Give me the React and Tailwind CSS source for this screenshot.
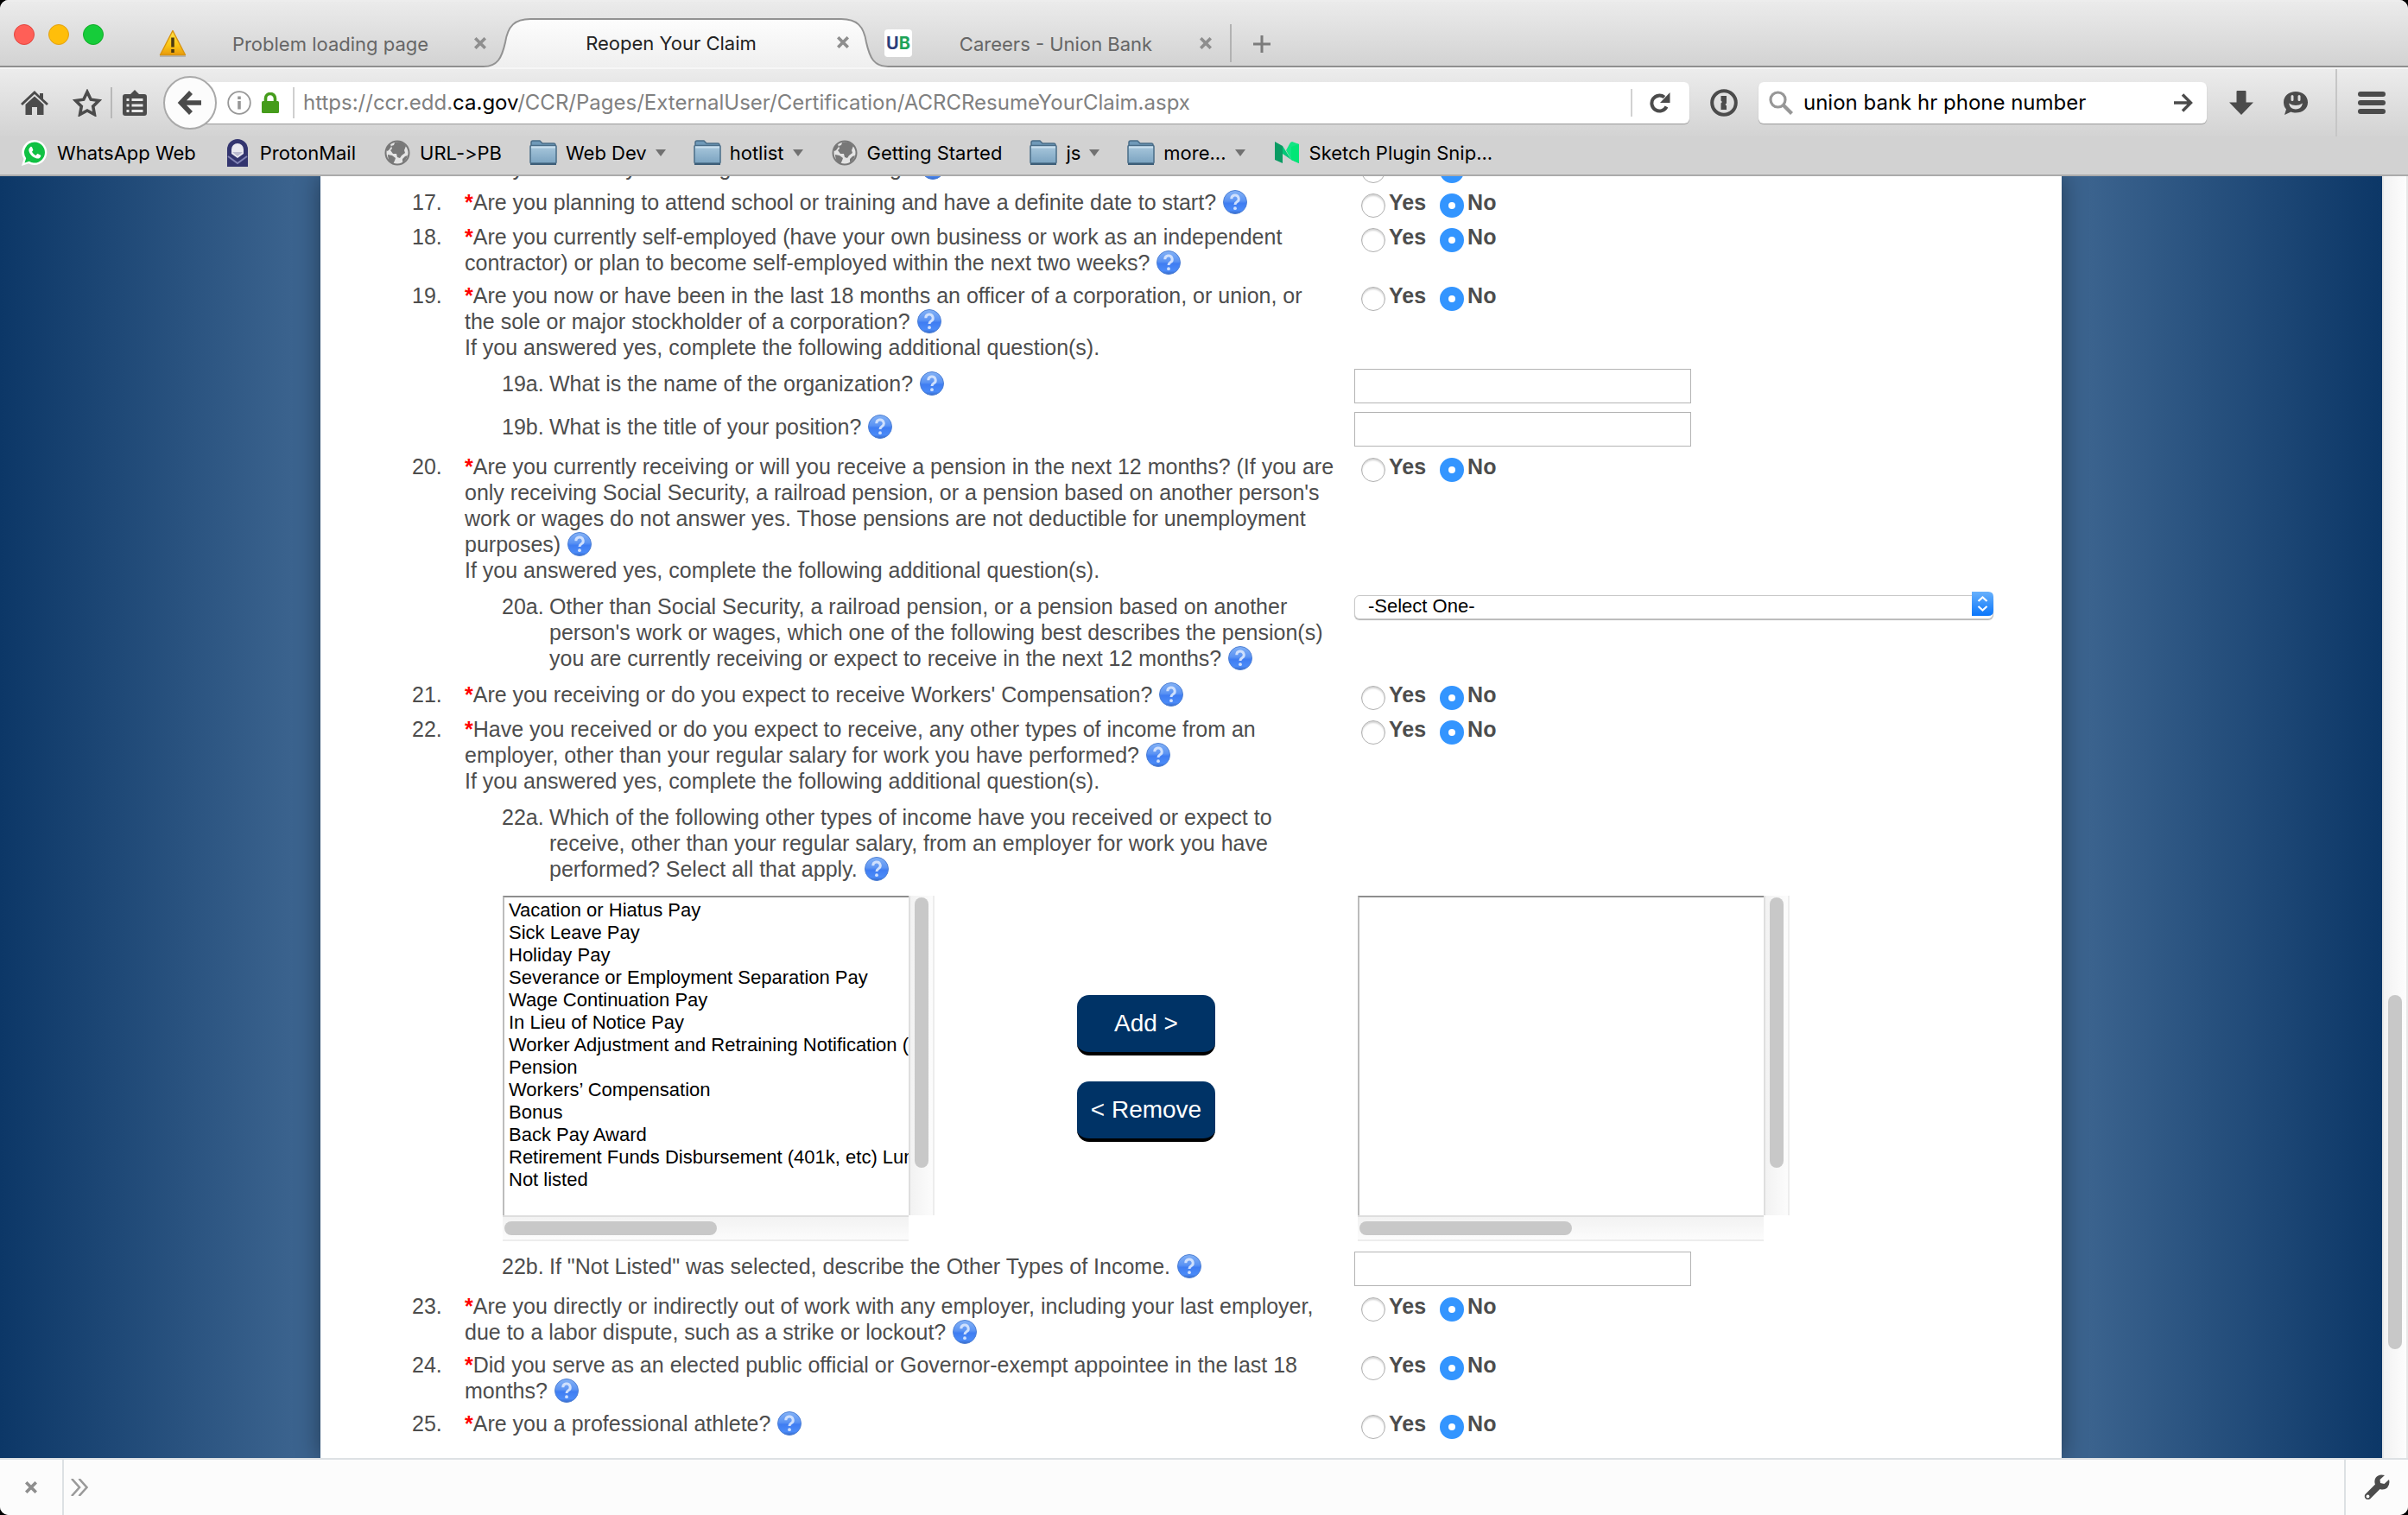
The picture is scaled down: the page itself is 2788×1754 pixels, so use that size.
import { useId } from "react";

const CLOSE = (
  <svg viewBox="0 0 14 14" className="size-3.5" aria-hidden="true">
    <path d="M2.5 2.5l9 9M11.5 2.5l-9 9" stroke="#8e8e8e" strokeWidth="3.6" strokeLinecap="square" />
  </svg>
);

function WarningIcon() {
  return (
    <svg viewBox="0 0 32 32" className="size-8 shrink-0" aria-hidden="true">
      <defs>
        <linearGradient id="warn" x1="0" y1="0" x2="0" y2="1">
          <stop offset="0" stopColor="#ffe14a" />
          <stop offset="0.6" stopColor="#fbc614" />
          <stop offset="1" stopColor="#e89a0c" />
        </linearGradient>
      </defs>
      <path d="M1 31h30" stroke="#b5b5b5" strokeWidth="2" />
      <path d="M16 1.5L30.5 29.5H1.5z" fill="url(#warn)" stroke="#d9940f" strokeWidth="1.4" strokeLinejoin="round" />
      <path d="M16 9.500v11" stroke="#4b3a12" strokeWidth="3.600" />
      <path d="M16 23v4" stroke="#4b3a12" strokeWidth="3.600" />
    </svg>
  );
}

function Globe() {
  return (
    <svg viewBox="0 0 30 30" className="size-[30px] shrink-0" aria-hidden="true">
      <circle cx="15" cy="15" r="13.500" fill="#e4e4e4" stroke="#787878" strokeWidth="2" />
      <path
        d="M12 3c5-2 10 0 13 4l-2 5 1 3-4 3-2 3-3-1-1-4-4 0-3-4 2-2-1-3 3-1zM3 8l4-3 1 3-3 4-2 1zM4 17l5 1 4 3-1 3-2 4c-4-2-6-6-6-11zM24 19l3-1c-1 4-3 6-6 8l0-4z"
        fill="#787878"
      />
    </svg>
  );
}

function Folder() {
  return (
    <svg viewBox="0 0 32 30" className="h-[30px] w-8 shrink-0" aria-hidden="true">
      <defs>
        <linearGradient id="folder" x1="0" y1="0" x2="0" y2="1">
          <stop offset="0" stopColor="#a9c8dd" />
          <stop offset="1" stopColor="#7ba3c0" />
        </linearGradient>
      </defs>
      <path d="M2 8V3q0-2 2-2h8l3 3h13q2 0 2 2v3z" fill="#6f99b8" stroke="#4a6d88" strokeWidth="1.500" />
      <rect x="1" y="6.500" width="30" height="20.500" rx="1" fill="url(#folder)" stroke="#4a6d88" strokeWidth="1.500" />
      <path d="M2 8.500h28" stroke="#c9dfee" strokeWidth="2" />
      <path d="M1 28h30" stroke="#3d5e78" strokeWidth="2" />
    </svg>
  );
}

function WhatsApp() {
  return (
    <svg viewBox="0 0 32 32" className="size-8 shrink-0" aria-hidden="true">
      <path d="M16 1a14.500 14.500 0 1 1-7 27.300L1 31l2.500-8A14.500 14.500 0 0 1 16 1z" fill="#fff" />
      <path d="M16 3.500a12 12 0 1 1-6.200 22.300L4.500 27.500l1.700-5.200A12 12 0 0 1 16 3.500z" fill="#10c143" />
      <path
        d="M11.200 9.200c.6-.5 1.500-.5 1.900.3l1.200 2.700c.2.500 0 1-.3 1.300l-1 1.200c1.100 2 2.500 3.300 4.600 4.200l1.200-1.400c.4-.5.9-.5 1.400-.3l2.500 1.300c.6.300.7.800.5 1.400-.6 1.900-2.500 2.900-4.400 2.500-4.600-1-8-4-9.300-8.400-.5-1.900.2-3.800 1.700-4.800z"
        fill="#fff"
      />
    </svg>
  );
}

function Proton() {
  return (
    <svg viewBox="0 0 24 32" className="h-8 w-6 shrink-0" aria-hidden="true">
      <path d="M0 32V12a12 12 0 0 1 24 0v20z" fill="#33356f" />
      <path d="M5 17v-5a7 7 0 0 1 14 0v5l-7 5z" fill="#e9e9f0" />
      <path d="M6 15h12l-6 5z" fill="#33356f" opacity="0.25" />
      <path d="M1 20l11 8 11-8" stroke="#8082b4" strokeWidth="2" fill="none" />
    </svg>
  );
}

function MediumLogo() {
  return (
    <svg viewBox="0 0 28 26" className="h-[26px] w-7 shrink-0" aria-hidden="true">
      <path d="M0 0l9 5v20L0 21z" fill="#0a9b63" />
      <path d="M9 5l10 16V1L28 3v22l-9-4L9 14z" fill="#00c878" />
      <path d="M18 1l-5 9 6 11 9-18-8-3z" fill="#11e583" />
      <path d="M19 6l9-3v22l-9-4z" fill="#00e676" />
    </svg>
  );
}

const BOOKMARKS = [
  { icon: <WhatsApp />, label: "WhatsApp Web" },
  { icon: <Proton />, label: "ProtonMail" },
  { icon: <Globe />, label: "URL->PB" },
  { icon: <Folder />, label: "Web Dev", menu: true },
  { icon: <Folder />, label: "hotlist", menu: true },
  { icon: <Globe />, label: "Getting Started" },
  { icon: <Folder />, label: "js", menu: true },
  { icon: <Folder />, label: "more...", menu: true },
  { icon: <MediumLogo />, label: "Sketch Plugin Snip..." },
];

function Tab({ icon, title }) {
  return (
    <div className="flex h-14 w-[379px] items-center">
      {icon}
      <span className="flex-1 pt-0.5 text-center text-[#666]">{title}</span>
      <button type="button" aria-label={"Close " + title}>{CLOSE}</button>
    </div>
  );
}

function TabStrip() {
  return (
    <div className="flex h-[78px] items-end border-t-2 border-white/60 bg-[linear-gradient(#ebebeb,#d2d2d2)] text-[22px] shadow-[inset_0_-2px_0_#8f8f8f]">
      <div className="flex h-[76px] w-[184px] shrink-0 items-center gap-4 pl-4">
        <button type="button" aria-label="Close window" className="size-6 rounded-full border border-[#e2463f] bg-[#ff5f57]" />
        <button type="button" aria-label="Minimize window" className="size-6 rounded-full border border-[#e1a116] bg-[#ffbe0a]" />
        <button type="button" aria-label="Zoom window" className="size-6 rounded-full border border-[#12ac28] bg-[#16cc3a]" />
      </div>
      <Tab icon={<WarningIcon />} title="Problem loading page" />
      <div className="relative -ml-[3px] flex h-[58px] w-[468px] items-center pr-[45px] pl-[25px]">
        <svg viewBox="0 0 468 58" preserveAspectRatio="none" className="absolute inset-0 size-full" aria-hidden="true">
          <defs>
            <linearGradient id="tab" x1="0" y1="0" x2="0" y2="1">
              <stop offset="0" stopColor="#fdfdfd" />
              <stop offset="1" stopColor="#efefef" />
            </linearGradient>
          </defs>
          <path d="M0 57C16 57 21 47 25 29C28 10 36 2 54 2H414C432 2 440 10 443 29C447 47 452 57 468 57V58H0z" fill="url(#tab)" />
          <path d="M0 57C16 57 21 47 25 29C28 10 36 2 54 2H414C432 2 440 10 443 29C447 47 452 57 468 57" fill="none" stroke="#929292" strokeWidth="2" />
        </svg>
        <span className="relative flex-1 pt-0.5 text-center text-[#222]">Reopen Your Claim</span>
        <button type="button" aria-label="Close Reopen Your Claim" className="relative">{CLOSE}</button>
      </div>
      <div className="-ml-1 flex">
        <Tab
          icon={
            <span className="flex size-8 items-center justify-center rounded-sm bg-white text-[20px] font-bold text-[#2d3f7c]">
              U<span className="text-[#1ea358]">B</span>
            </span>
          }
          title="Careers - Union Bank"
        />
      </div>
      <div className="mb-1.5 ml-[21px] h-11 w-0.5 bg-[#b2b2b2]" />
      <button type="button" aria-label="New tab" className="mb-[17px] ml-[25px]">
        <svg viewBox="0 0 20 20" className="size-5" aria-hidden="true">
          <path d="M10 0v20M0 10h20" stroke="#7b7b7b" strokeWidth="3" />
        </svg>
      </button>
    </div>
  );
}

function NavBar() {
  return (
    <div className="flex h-20 items-center border-t-2 border-[#f6f6f6] bg-[linear-gradient(#ececec,#d3d3d3)] text-[#4b4b4b]">
      <button type="button" aria-label="Home" className="ml-6">
        <svg viewBox="0 0 32 28" className="h-7 w-8" fill="currentColor" aria-hidden="true">
          <path d="M16 0L0 15l2 2L16 4l14 13 2-2-6-5.500V3h-4v3z" />
          <path d="M16 6.500L5.500 16v12H13v-9h6v9h7.500V16z" />
        </svg>
      </button>
      <button type="button" aria-label="Bookmark this page" className="ml-7">
        <svg viewBox="0 0 34 32" className="h-8 w-[34px]" aria-hidden="true">
          <path d="M17 3.500l4.200 8.700 9.300 1.300-6.800 6.600 1.700 9.400L17 25l-8.400 4.500 1.700-9.400-6.800-6.600 9.300-1.300z" fill="none" stroke="currentColor" strokeWidth="3.600" />
        </svg>
      </button>
      <div className="ml-2.5 h-9 w-0.5 bg-[#b8b8b8]" />
      <button type="button" aria-label="Show bookmarks" className="ml-[11px]">
        <svg viewBox="0 0 30 30" className="size-[30px]" aria-hidden="true">
          <path d="M4 5h6l5-5 5 5h6q3 0 3 3v19q0 3-3 3H4q-3 0-3-3V8q0-3 3-3z" fill="currentColor" />
          <path d="M5.500 11.500h3M11.500 11.500h13M5.500 18h3M11.500 18h13M5.500 24.500h3M11.500 24.500h13" stroke="#e8e8e8" strokeWidth="3" />
        </svg>
      </button>
      <div className="ml-[18px] flex flex-1 items-center">
        <button type="button" aria-label="Back" className="relative flex size-[62px] shrink-0 items-center justify-center rounded-full border-2 border-[#a9a9a9] bg-[#fcfcfc]">
          <svg viewBox="0 0 30 30" className="size-[30px]" aria-hidden="true">
            <path d="M16 3L4.500 15 16 27M5 15h23" fill="none" stroke="currentColor" strokeWidth="5.500" />
          </svg>
        </button>
        <div className="-ml-5 flex h-12 flex-1 items-center rounded-r-md bg-white pl-8 shadow-[0_1px_1px_#9a9a9a]">
          <svg viewBox="0 0 28 28" className="size-7 shrink-0" aria-hidden="true">
            <circle cx="14" cy="14" r="12.800" fill="none" stroke="#979797" strokeWidth="1.800" />
            <path d="M14 6.500v3.500M14 12v9.500" stroke="#979797" strokeWidth="3.600" />
          </svg>
          <svg viewBox="0 0 20 24" className="ml-3 h-6 w-5 shrink-0" aria-hidden="true">
            <rect x="0" y="10" width="20" height="14" rx="1.500" fill="#459c1b" />
            <path d="M4.500 11V7a5.500 5.500 0 0 1 11 0v4" fill="none" stroke="#459c1b" strokeWidth="3.600" />
          </svg>
          <div className="ml-4 h-9 w-0.5 shrink-0 bg-[#cfcfcf]" />
          <div className="ml-2.5 flex-1 text-[24px] text-[#808080]">
            https://ccr.edd.<span className="text-black">ca.gov</span>/CCR/Pages/ExternalUser/Certification/ACRCResumeYourClaim.aspx
          </div>
          <div className="h-8 w-0.5 bg-[#d2d2d2]" />
          <button type="button" aria-label="Reload" className="mr-[22px] ml-5">
            <svg viewBox="0 0 24 24" className="size-6" aria-hidden="true">
              <path d="M19.500 16.500A9 9 0 1 1 17 5.500" fill="none" stroke="currentColor" strokeWidth="4" />
              <path d="M23.500 0v12H12z" fill="currentColor" />
            </svg>
          </button>
        </div>
      </div>
      <button type="button" aria-label="1Password" className="ml-6">
        <svg viewBox="0 0 32 32" className="size-8" aria-hidden="true">
          <circle cx="16" cy="16" r="13.800" fill="none" stroke="currentColor" strokeWidth="4" />
          <path d="M12.500 8h6.500v8.500l-1.500 1.500 1.500 1.500V24h-6.500v-7.500l1.500-1.500-1.500-1.500z" fill="currentColor" />
        </svg>
      </button>
      <div className="ml-6 flex h-12 w-[519px] items-center rounded-md bg-white pr-4 pl-3 shadow-[0_1px_1px_#9a9a9a]">
        <svg viewBox="0 0 28 28" className="size-7 shrink-0" aria-hidden="true">
          <circle cx="10.500" cy="10.500" r="8.500" fill="none" stroke="#979797" strokeWidth="3.200" />
          <path d="M17 17l9.500 9.500" stroke="#979797" strokeWidth="4.200" />
        </svg>
        <input aria-label="Search" defaultValue="union bank hr phone number" className="ml-3 min-w-0 flex-1 bg-transparent text-[24px] text-black outline-none" />
        <button type="button" aria-label="Submit search">
          <svg viewBox="0 0 22 22" className="size-[22px]" aria-hidden="true">
            <path d="M10 1.500l9.500 9.500-9.500 9.500M0 11h18" fill="none" stroke="currentColor" strokeWidth="3.400" />
          </svg>
        </button>
      </div>
      <button type="button" aria-label="Downloads" className="ml-[26px]">
        <svg viewBox="0 0 28 28" className="size-7" fill="currentColor" aria-hidden="true">
          <path d="M8.500 1q0-1 1-1h9q1 0 1 1v12.500H28L14 28 0 13.500h8.500z" />
        </svg>
      </button>
      <button type="button" aria-label="Chat" className="ml-[34px]">
        <svg viewBox="0 0 30 28" className="h-7 w-[30px]" aria-hidden="true">
          <path d="M15 1c8 0 14 5 14 12.500S23 25.500 15 25.500c-2 0-4-.3-5.500-1L2 28l2-6.500C2 19.500 1 16.500 1 13.500 1 6 7 1 15 1z" fill="currentColor" />
          <path d="M11 6.500v4M19 6.500v4" stroke="#e0e0e0" strokeWidth="3" strokeLinecap="round" />
          <path d="M7 14.500q8 5 16 0-1.500 7-8 7t-8-7z" fill="#e0e0e0" />
        </svg>
      </button>
      <div className="ml-[31px] h-full w-0.5 bg-[#c6c6c6]" />
      <button type="button" aria-label="Open menu" className="mr-[26px] ml-6 flex flex-col gap-1">
        <span className="h-1.5 w-8 rounded-[3px] bg-[#4b4b4b]" />
        <span className="h-1.5 w-8 rounded-[3px] bg-[#4b4b4b]" />
        <span className="h-1.5 w-8 rounded-[3px] bg-[#4b4b4b]" />
      </button>
    </div>
  );
}

function BookmarksBar() {
  return (
    <nav className="flex h-[46px] items-center gap-8 border-b-2 border-[#ababab] bg-[#d2d2d2] pb-1.5 pl-6 text-[22px] text-black [font-variant-ligatures:none]">
      {BOOKMARKS.map((b) => (
        <a key={b.label} href="#" className="flex items-center gap-2.5 whitespace-nowrap">
          <span className="flex w-8 justify-center">{b.icon}</span>
          {b.label}
          {b.menu && (
            <svg viewBox="0 0 12 8" className="h-2 w-3" aria-hidden="true">
              <path d="M0 0h12L6 8z" fill="#717171" />
            </svg>
          )}
        </a>
      ))}
    </nav>
  );
}

function Help() {
  return (
    <button type="button" aria-label="Help" className="-mt-1 ml-2 inline-block size-7 align-middle">
      <svg viewBox="0 0 28 28" className="size-7" aria-hidden="true">
        <defs>
          <linearGradient id="help" x1="0" y1="0" x2="0" y2="1">
            <stop offset="0" stopColor="#83b2f6" />
            <stop offset="0.450" stopColor="#5b93f3" />
            <stop offset="0.550" stopColor="#3f7df2" />
            <stop offset="0.850" stopColor="#4a8af8" />
            <stop offset="1" stopColor="#3468c8" />
          </linearGradient>
        </defs>
        <circle cx="14" cy="14" r="13.500" fill="url(#help)" stroke="#4f80d4" strokeWidth="1" />
        <path d="M9.800 10.300a4.200 4.200 0 1 1 6.300 3.500c-1.500.9-2.100 1.500-2.100 3.200" fill="none" stroke="#cfe0fd" strokeWidth="3" />
        <circle cx="14" cy="21.200" r="1.900" fill="#cfe0fd" />
      </svg>
    </button>
  );
}

const RADIO =
  "mt-2 size-7 shrink-0 appearance-none rounded-full border border-[#b0b0b0] bg-white shadow-[inset_0_2px_2px_#d4d4d4] checked:border-[10px] checked:border-[#3395ff] checked:shadow-none";

function YesNo({ n }) {
  return (
    <div role="radiogroup" aria-label={"Question " + n} className="flex h-[30px] items-center gap-4 pl-2 font-bold">
      <label className="flex items-center gap-1">
        <input type="radio" name={"q" + n} value="yes" className={RADIO} />
        Yes
      </label>
      <label className="flex items-center gap-1">
        <input type="radio" name={"q" + n} value="no" defaultChecked className={RADIO} />
        No
      </label>
    </div>
  );
}

function Question({ n, children, followUp, className }) {
  return (
    <div className={"grid grid-cols-[61px_1030px_1fr] pl-[106px] " + className}>
      <div>{n}.</div>
      <div className="pr-[22px]">
        <span className="font-bold text-[#f00]">*</span>
        {children}
        <Help />
        {followUp && <div>If you answered yes, complete the following additional question(s).</div>}
      </div>
      <YesNo n={n} />
    </div>
  );
}

function SubQuestion({ n, text, className, children }) {
  const id = useId();
  return (
    <div className={"grid grid-cols-[55px_932px_1fr] pl-[210px] " + className}>
      <div className="pt-0.5">{n}.</div>
      <div className="pt-0.5 pr-2">
        <label htmlFor={id}>{text}</label>
        <Help />
      </div>
      {children && children(id)}
    </div>
  );
}

const textBox = (id) => <input id={id} type="text" className="h-10 w-[390px] border border-[#b4b4b4] bg-white px-2 outline-none" />;

const pensionSelect = (id) => (
  <div className="relative h-7 w-[740px]">
    <select id={id} className="h-7 w-full appearance-none rounded-md border border-[#c9c9c9] bg-white pb-0.5 pl-[15px] text-[22px] leading-[24px] text-black shadow-[0_1px_1px_#b0b0b0]">
      <option>-Select One-</option>
    </select>
    <svg viewBox="0 0 25 28" className="pointer-events-none absolute top-0 right-0 h-7 w-[25px]" aria-hidden="true">
      <defs>
        <linearGradient id="sel" x1="0" y1="0" x2="0" y2="1">
          <stop offset="0" stopColor="#68b1fc" />
          <stop offset="1" stopColor="#0a76fb" />
        </linearGradient>
      </defs>
      <path d="M0 0H19q6 0 6 6V22q0 6-6 6H0z" fill="url(#sel)" />
      <path d="M7.500 11L12.500 6.500 17.500 11M7.500 17l5 4.500 5-4.500" fill="none" stroke="#fff" strokeWidth="2.200" />
    </svg>
  </div>
);

const INCOME = [
  "Vacation or Hiatus Pay",
  "Sick Leave Pay",
  "Holiday Pay",
  "Severance or Employment Separation Pay",
  "Wage Continuation Pay",
  "In Lieu of Notice Pay",
  "Worker Adjustment and Retraining Notification (WARN)",
  "Pension",
  "Workers’ Compensation",
  "Bonus",
  "Back Pay Award",
  "Retirement Funds Disbursement (401k, etc) Lump Sum",
  "Not listed",
];

function ListBox({ label, items }) {
  return (
    <div className="grid h-[400px] w-[500px] grid-cols-[1fr_30px] grid-rows-[1fr_30px]">
      <select
        multiple
        aria-label={label}
        className="h-full w-full appearance-none overflow-hidden border-t-2 border-l-2 border-t-[#8e8e8e] border-l-[#bcbcbc] bg-white pt-0.5 pl-[5px] text-[22px] text-black outline-none"
      >
        {items.map((t) => (
          <option key={t} className="h-[26px] min-h-0 overflow-visible p-0 leading-[26px] whitespace-nowrap">
            {t}
          </option>
        ))}
      </select>
      <div className="flex flex-col items-center border-x-2 border-l-[#dedede] border-r-[#ededed] bg-[linear-gradient(to_right,#f2f2f2,#fcfcfc)] pt-0.5">
        <div className="h-[313px] w-4 rounded-full bg-[#c8c8c8]" />
      </div>
      <div className="flex items-center border-y-2 border-t-[#dedede] border-b-[#ededed] bg-[linear-gradient(#f2f2f2,#fcfcfc)] pl-0.5">
        <div className="h-4 w-[246px] rounded-full bg-[#c8c8c8]" />
      </div>
    </div>
  );
}

const MOVE = "h-[70px] w-40 rounded-[14px] border-b-4 border-black bg-[#003366] text-[28px] text-white";

function ClaimForm() {
  return (
    <form className="-mt-[25px] text-[25px] leading-[30px] text-[#4d4d4d]">
      <Question n={16} className="">Are you currently attending school or training?</Question>
      <Question n={17} className="mt-2.5">Are you planning to attend school or training and have a definite date to start?</Question>
      <Question n={18} className="mt-2.5">
        Are you currently self-employed (have your own business or work as an independent contractor) or plan to become self-employed within the next two weeks?
      </Question>
      <Question n={19} followUp className="mt-2">
        Are you now or have been in the last 18 months an officer of a corporation, or union, or the sole or major stockholder of a corporation?
      </Question>
      <SubQuestion n="19a" text="What is the name of the organization?" className="mt-2.5">{textBox}</SubQuestion>
      <SubQuestion n="19b" text="What is the title of your position?" className="mt-2.5">{textBox}</SubQuestion>
      <Question n={20} followUp className="mt-2">
        Are you currently receiving or will you receive a pension in the next 12 months? (If you are only receiving Social Security, a railroad pension, or a pension based on another person's work or wages do not answer yes. Those pensions are not deductible for unemployment purposes)
      </Question>
      <SubQuestion
        n="20a"
        text="Other than Social Security, a railroad pension, or a pension based on another person's work or wages, which one of the following best describes the pension(s) you are currently receiving or expect to receive in the next 12 months?"
        className="mt-2.5"
      >
        {pensionSelect}
      </SubQuestion>
      <Question n={21} className="mt-3">Are you receiving or do you expect to receive Workers' Compensation?</Question>
      <Question n={22} followUp className="mt-2.5">
        Have you received or do you expect to receive, any other types of income from an employer, other than your regular salary for work you have performed?
      </Question>
      <SubQuestion
        n="22a"
        text="Which of the following other types of income have you received or expect to receive, other than your regular salary, from an employer for work you have performed? Select all that apply."
        className="mt-2.5"
      />
      <div className="mt-4 ml-[211px] flex items-center gap-[165px]">
        <ListBox label="Available types of income" items={INCOME} />
        <div className="flex flex-col gap-[30px]">
          <button type="button" className={MOVE}>Add &gt;</button>
          <button type="button" className={MOVE}>&lt; Remove</button>
        </div>
        <ListBox label="Selected types of income" items={[]} />
      </div>
      <SubQuestion n="22b" text={'If "Not Listed" was selected, describe the Other Types of Income.'} className="mt-3">{textBox}</SubQuestion>
      <Question n={23} className="mt-2">
        Are you directly or indirectly out of work with any employer, including your last employer, due to a labor dispute, such as a strike or lockout?
      </Question>
      <Question n={24} className="mt-2">
        Did you serve as an elected public official or Governor-exempt appointee in the last 18 months?
      </Question>
      <Question n={25} className="mt-2">Are you a professional athlete?</Question>
    </form>
  );
}

export default function App() {
  return (
    <div className="h-screen bg-black font-['Liberation_Sans',Arial,sans-serif]">
      <div className="flex h-full flex-col overflow-hidden rounded-[10px] bg-white">
        <header className="shrink-0 font-[Inter,sans-serif]">
          <TabStrip />
          <NavBar />
          <BookmarksBar />
        </header>
        <div className="flex min-h-0 flex-1">
          <main className="min-w-0 flex-1 overflow-hidden bg-[linear-gradient(to_right,#0c3767_0,#3b638e_340px,#3b638e_calc(100%-340px),#0c3767_100%)]">
            <div className="mx-auto h-full w-[2016px] overflow-hidden bg-white shadow-[0_0_26px_rgba(0,0,0,0.4)]">
              <ClaimForm />
            </div>
          </main>
          <div className="flex w-[30px] flex-col items-center border-x-2 border-[#e8e8e8] bg-[linear-gradient(to_right,#f2f2f2,#fdfdfd)]">
            <div className="flex-[948]" />
            <div className="w-4 flex-[410] rounded-full bg-[#c8c8c8]" />
            <div className="flex-[126]" />
          </div>
        </div>
        <footer className="flex h-[66px] shrink-0 items-center border-t-2 border-[#dde1e4] bg-[#fcfcfc]">
          <button type="button" aria-label="Close toolbar" className="flex h-full w-[74px] items-center justify-center border-r-2 border-[#dde1e4]">{CLOSE}</button>
          <button type="button" aria-label="More commands" className="ml-2">
            <svg viewBox="0 0 20 20" className="size-5" aria-hidden="true">
              <path d="M1 0l9 10-9 10M9.500 0l9 10-9 10" fill="none" stroke="#9a9a9a" strokeWidth="2.600" />
            </svg>
          </button>
          <button type="button" aria-label="Developer tools" className="ml-auto flex h-full w-[74px] items-center justify-center border-l-2 border-[#dde1e4]">
            <svg viewBox="0 0 30 30" className="size-[30px]" aria-hidden="true">
              <path d="M24 1q-7-2-10.500 3-2 3.500-.5 7.500L1.500 23Q0 25 1.500 27.500T7 28.500L18.500 17q5 1.500 8.500-1.500Q30.500 11 29 6l-5.500 5-4.500-1-.5-4z" fill="#4c4c4c" />
              <circle cx="4.500" cy="25.500" r="1.900" fill="#fcfcfc" />
            </svg>
          </button>
        </footer>
      </div>
    </div>
  );
}
